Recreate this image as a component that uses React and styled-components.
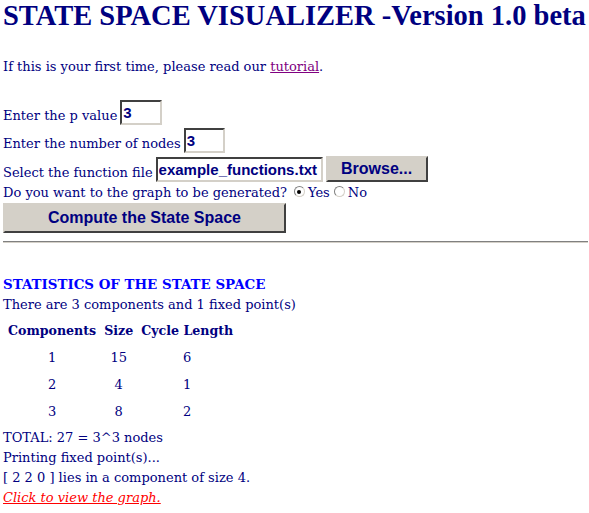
import React from "react"
import styled, { createGlobalStyle } from "styled-components"

const GlobalStyle = createGlobalStyle`
	html, body {
		margin: 0;
		padding: 0;
		background: #ffffff;
	}
	body {
		font-family: "DejaVu Serif", "Liberation Serif", serif;
		font-size: 13px;
		color: #000080;
	}
`

const Page = styled.div`
	padding: 0 3px;
	width: 589px;
	box-sizing: border-box;
`

const Title = styled.h1`
	margin: 0;
	padding-top: 3px;
	font-family: "Liberation Serif", "Times New Roman", serif;
	font-size: 28.5px;
	font-weight: bold;
	line-height: 26px;
	white-space: nowrap;
`

const Intro = styled.p`
	margin: 29px 0 0;
	line-height: 18px;
`

const Link = styled.a`
	color: ${p => p.$visited ? "#800080" : "#ff0000"};
	font-style: ${p => p.$italic ? "italic" : "normal"};
	text-decoration: underline;
`

const Form = styled.form`
	margin-top: 24px;
	display: flex;
	flex-direction: column;
	gap: 3px;
`

const Row = styled.div`
	display: flex;
	align-items: flex-end;
	gap: 3px;
	line-height: ${p => p.$lh || 18}px;
`

const TextBox = styled.input`
	width: ${p => p.$w}px;
	height: 25px;
	box-sizing: border-box;
	border-style: solid;
	border-width: 2px;
	border-color: #404040 #d4d0c8 #d4d0c8 #404040;
	padding: 0 1px;
	font-family: "Liberation Sans", Arial, sans-serif;
	font-size: 15px;
	font-weight: bold;
	color: #000080;
	background: #ffffff;
	outline: none;
`

const Button = styled.button`
	width: ${p => p.$w}px;
	height: ${p => p.$h}px;
	box-sizing: border-box;
	background: #d4d0c8;
	border-style: solid;
	border-width: 2px;
	border-color: #d4d0c8 #404040 #404040 #d4d0c8;
	font-family: "Liberation Sans", Arial, sans-serif;
	font-size: 16px;
	font-weight: bold;
	color: #000080;
	padding: 0;
`

const Radio = styled.span`
	display: inline-block;
	width: 11px;
	height: 11px;
	box-sizing: border-box;
	border-radius: 50%;
	border: 1px solid #808080;
	border-right-color: #d4d0c8;
	border-bottom-color: #d4d0c8;
	background: #ffffff;
	position: relative;
	margin: 0 3px 0 4px;
	vertical-align: 0;

	&::after {
		content: "";
		display: ${p => p.$on ? "block" : "none"};
		position: absolute;
		left: 2.5px;
		top: 2.5px;
		width: 4px;
		height: 4px;
		border-radius: 50%;
		background: #000000;
	}
`

const Rule = styled.hr`
	margin: 8px 0 0;
	border: none;
	border-top: 1px solid #808080;
	border-bottom: 1px solid #d4d0c8;
	width: 585px;
`

const Heading = styled.h3`
	margin: 32px 0 2px;
	font-size: 13.4px;
	font-weight: bold;
	color: #0000ff;
	line-height: 18px;
`

const Text = styled.div`
	line-height: 20px;
`

const Table = styled.table`
	margin: 1px 0 3px 1px;
	border-collapse: collapse;

	th {
		font-size: 12.6px;
		font-weight: bold;
		text-align: left;
		height: 28px;
		padding: 0 4px;
	}
	td {
		text-align: center;
		height: 27px;
		padding: 0 4px;
	}
`

const stats = [
	[1, 15, 6],
	[2, 4, 1],
	[3, 8, 2]
]

function App(){
	return (
		<Page>
			<GlobalStyle/>
			<Title>STATE SPACE VISUALIZER -Version 1.0 beta</Title>
			<Intro>If this is your first time, please read our <Link $visited href="#">tutorial</Link>.</Intro>
			<Form>
				<Row>Enter the p value <TextBox $w={42} defaultValue="3"/></Row>
				<Row>Enter the number of nodes <TextBox $w={41} defaultValue="3"/></Row>
				<Row>
					Select the function file <TextBox $w={167} defaultValue="example_functions.txt"/>
					<Button type="button" $w={102} $h={26}>Browse...</Button>
				</Row>
				<Row $lh={15}>Do you want to the graph to be generated? <span><Radio $on/>Yes<Radio/>No</span></Row>
				<Button type="button" $w={283} $h={30}>Compute the State Space</Button>
			</Form>
			<Rule/>
			<Heading>STATISTICS OF THE STATE SPACE</Heading>
			<Text>There are 3 components and 1 fixed point(s)</Text>
			<Table>
				<thead>
					<tr><th>Components</th><th>Size</th><th>Cycle Length</th></tr>
				</thead>
				<tbody>
					{stats.map(r => (
						<tr key={r[0]}>{r.map((v, i) => <td key={i}>{v}</td>)}</tr>
					))}
				</tbody>
			</Table>
			<Text>TOTAL: 27 = 3^3 nodes</Text>
			<Text>Printing fixed point(s)...</Text>
			<Text>[ 2 2 0 ] lies in a component of size 4.</Text>
			<Text><Link $italic href="#">Click to view the graph.</Link></Text>
		</Page>
	)
}

export default App
